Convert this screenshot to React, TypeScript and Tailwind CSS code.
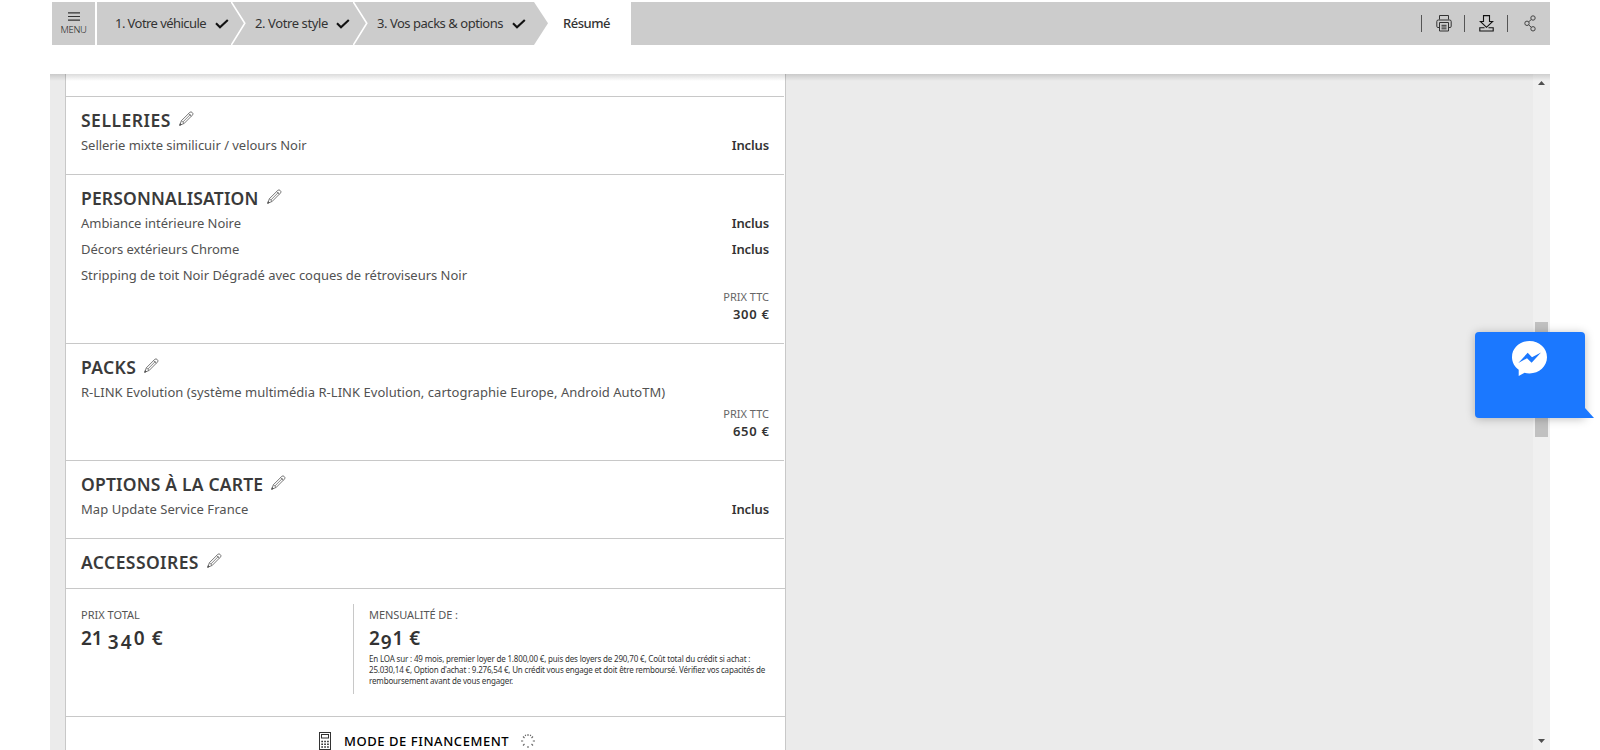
import type { ReactNode } from "react";

function Pencil() {
  return (
    <svg className="-mt-[5px] ml-2 h-[15px] w-[15px]" viewBox="0 0 15 15" fill="none" stroke="#555" strokeWidth="0.8" strokeLinejoin="round">
      <path d="M0.7 14.3 L2.4 9.7 L10.9 1.3 Q12 0.3 13.2 1.5 Q14.6 2.8 13.6 3.9 L5.2 12.4 Z" />
      <path d="M2.4 9.7 L5.2 12.4 M3.8 11.1 L11.6 3.2 M9.6 2.6 L12.3 5.3" strokeWidth="0.7" />
      <path d="M0.7 14.3 L1.3 12.6 L2.3 13.6 Z" fill="#444" />
    </svg>
  );
}

function Check() {
  return (
    <svg className="h-[10px] w-[14px]" viewBox="0 0 14 10" fill="none" stroke="#111" strokeWidth="2.1">
      <path d="M1 4.3 L5 8.2 L12.8 1" />
    </svg>
  );
}

function Chevron() {
  return (
    <svg className="h-[43px] w-4 shrink-0" viewBox="0 0 16 43" fill="none" stroke="#fff" strokeWidth="1.6">
      <path d="M0 -0.5 L13.8 21.2 L0 43.5" />
    </svg>
  );
}

function Section({ title, tracking, last, children }: { title: string; tracking: string; last?: boolean; children?: ReactNode }) {
  return (
    <section className={"mr-px border-t border-[#c8c8c8] pl-[15px] pr-[15px] pt-3 " + (last ? "pb-[14px]" : "pb-4")}>
      <div className="flex h-[23px] items-center">
        <h2 className={"text-[17.5px] font-semibold leading-[23px] text-[#3a3a3a] " + tracking}>{title}</h2>
        <Pencil />
      </div>
      {children}
    </section>
  );
}

function Row({ label, tracking = "", included }: { label: string; tracking?: string; included?: boolean }) {
  return (
    <div className="flex h-[26px] items-center justify-between whitespace-nowrap text-[13px] leading-[26px]">
      <span className={"text-[#525252] " + tracking}>{label}</span>
      {included && <span className="font-semibold tracking-[-0.12px]">Inclus</span>}
    </div>
  );
}

function Price({ value }: { value: string }) {
  return (
    <div className="h-[39px] text-right">
      <div className="text-[11px] leading-[17px] text-[#666]">PRIX TTC</div>
      <div className="-mr-[0.6px] pt-px text-[13px] font-semibold leading-[17px] tracking-[0.7px]">{value}</div>
    </div>
  );
}

function Low({ children }: { children: ReactNode }) {
  return <span className="inline-block translate-y-1">{children}</span>;
}

const tab = "flex shrink-0 items-center justify-between whitespace-nowrap";

export default function App() {
  return (
    <div className="relative h-[750px] w-[1600px] overflow-hidden bg-white font-['Noto_Sans','Open_Sans',sans-serif] text-[#333]">
      <header className="flex h-[74px] pl-[52px] pr-[50px] pt-[2px]">
        <div className="flex h-[43px] w-full bg-[#ccc] text-[13px] text-[#333]">
          <div className="flex w-[43px] flex-col items-center pt-[10px]">
            <svg className="h-[9px] w-3" viewBox="0 0 12 9" stroke="#333" strokeWidth="1.2">
              <path d="M0 0.8 H12 M0 4.5 H12 M0 8.2 H12" />
            </svg>
            <span className="mt-[2px] text-[9.5px] font-light leading-[14px] tracking-[-0.3px] text-[#222]">MENU</span>
          </div>
          <div className="w-[2px] bg-white" />
          <div className={tab + " w-[134px] pl-[18px] pr-[2px]"}>
            <span className="tracking-[-0.56px]">1. Votre véhicule</span>
            <Check />
          </div>
          <Chevron />
          <div className={tab + " w-[106px] pl-[8px] pr-[3px]"}>
            <span className="tracking-[-0.4px]">2. Votre style</span>
            <Check />
          </div>
          <Chevron />
          <div className={tab + " w-[165px] pl-[8px] pr-[8px]"}>
            <span className="tracking-[-0.47px]">3. Vos packs &amp; options</span>
            <Check />
          </div>
          <div className="flex w-[97px] items-center bg-white">
            <svg className="h-[43px] w-[14px]" viewBox="0 0 14 43" fill="#ccc">
              <path d="M0 0 L14 21.3 L0 43 Z" />
            </svg>
            <span className="pl-[15px] font-medium tracking-[-0.5px]">Résumé</span>
          </div>
          <div className="flex flex-1 items-center justify-end pr-[14px]">
            <div className="h-[17px] w-px bg-[#555]" />
            <svg className="ml-[14px] mr-[12px] h-[17px] w-4" viewBox="0 0 16 17" fill="none" stroke="#333" strokeWidth="1">
              <path d="M3.5 4.5 V0.5 H12.5 V4.5 M3.5 12.5 H2 Q0.8 12.5 0.8 11.3 V6.5 Q0.8 5 2.3 5 H13.7 Q15.2 5 15.2 6.5 V11.3 Q15.2 12.5 14 12.5 H12.5" />
              <path d="M3.5 7.5 H12.5 V16 H3.5 Z M5.5 10.3 H10.5 M5.5 12 H10.5 M5.5 13.8 H10.5" />
            </svg>
            <div className="h-[17px] w-px bg-[#555]" />
            <svg className="ml-[14px] mr-[13px] h-[17px] w-[15px]" viewBox="0 0 15 17" fill="none" stroke="#111" strokeWidth="1.1">
              <path d="M4.5 0.6 H10.5 V6.5 H13.6 L7.5 12.3 L1.4 6.5 H4.5 Z" />
              <path d="M5.5 12.7 H0.8 V16 H14.2 V12.7 H9.5" />
            </svg>
            <div className="h-[17px] w-px bg-[#555]" />
            <svg className="ml-[16px] h-[17px] w-3" viewBox="0 0 12 17" fill="none" stroke="#444" strokeWidth="1">
              <circle cx="9" cy="3" r="2.2" />
              <circle cx="3" cy="8.3" r="2.2" />
              <circle cx="9" cy="13.8" r="2.2" />
              <path d="M4.7 6.8 L7.3 4.5 M4.7 9.9 L7.3 12.3" />
            </svg>
          </div>
        </div>
      </header>

      <main className="relative mx-[50px] flex h-[676px] justify-between overflow-hidden bg-[#ebebeb] pl-[15px]">
        <div className="pointer-events-none absolute inset-x-0 top-0 h-[7px] bg-linear-to-b from-black/14 to-transparent" />
        <div className="h-full w-[721px] border-x border-[#c8c8c8] bg-white pt-[22px]">
          <Section title="SELLERIES" tracking="tracking-[0.5px]">
            <Row label="Sellerie mixte similicuir / velours Noir" tracking="tracking-[-0.03px]" included />
          </Section>
          <Section title="PERSONNALISATION" tracking="tracking-[0.16px]">
            <Row label="Ambiance intérieure Noire" tracking="tracking-[-0.04px]" included />
            <Row label="Décors extérieurs Chrome" tracking="tracking-[-0.06px]" included />
            <Row label="Stripping de toit Noir Dégradé avec coques de rétroviseurs Noir" tracking="tracking-[-0.02px]" />
            <Price value="300 €" />
          </Section>
          <Section title="PACKS" tracking="tracking-[0.35px]">
            <Row label="R-LINK Evolution (système multimédia R-LINK Evolution, cartographie Europe, Android AutoTM)" tracking="tracking-[0.035px]" />
            <Price value="650 €" />
          </Section>
          <Section title="OPTIONS À LA CARTE" tracking="tracking-[0.19px]">
            <Row label="Map Update Service France" tracking="tracking-[0.05px]" included />
          </Section>
          <Section title="ACCESSOIRES" tracking="tracking-[0.42px]" last />

          <section className="flex h-[128px] border-t border-[#c8c8c8] pl-[15px] pt-[15px]">
            <div className="h-[90px] w-[273px] border-r border-[#c8c8c8] pt-[3px]">
              <div className="text-[11px] leading-4 text-[#555]">PRIX TOTAL</div>
              <div className="mt-[4px] text-[19px] font-semibold leading-[22px]">
                21<span className="ml-[5px] tracking-[2.1px]"><Low>3</Low><Low>4</Low>0</span>
                <span className="ml-[5px]">€</span>
              </div>
            </div>
            <div className="pl-[15px] pt-[3px]">
              <div className="text-[11px] leading-4 tracking-[-0.07px] text-[#555]">MENSUALITÉ DE :</div>
              <div className="mt-[4px] text-[19px] font-semibold leading-[22px] tracking-[0.9px]">
                2<Low>9</Low>1<span className="ml-[5px]">€</span>
              </div>
              <div className="mt-[4px] whitespace-nowrap text-[8px] leading-[11px] tracking-[-0.17px]">
                En LOA sur : 49 mois, premier loyer de 1.800,00 €, puis des loyers de 290,70 €, Coût total du crédit si achat :
                <br />
                <span className="tracking-[-0.19px]">25.030,14 €, Option d'achat : 9.276,54 €, Un crédit vous engage et doit être remboursé. Vérifiez vos capacités de</span>
                <br />
                remboursement avant de vous engager.
              </div>
            </div>
          </section>

          <section className="flex border-t border-[#c8c8c8] pl-[253px] pt-[15px] text-black">
            <svg className="h-[19px] w-[12px]" viewBox="0 0 12 19" fill="none" stroke="#333" strokeWidth="1">
              <rect x="0.5" y="0.5" width="11" height="17" />
              <rect x="2.5" y="2.5" width="7" height="3.5" />
              <path d="M2.3 9.5 H10 M2.3 12.3 H10 M2.3 15 H10" strokeWidth="1.6" strokeDasharray="1.7 1.2" />
            </svg>
            <span className="ml-[13px] h-[19px] whitespace-nowrap text-[13px] font-medium leading-[19px] tracking-[0.56px]">MODE DE FINANCEMENT</span>
            <svg className="ml-[12px] mt-[2px] h-[14px] w-[14px]" viewBox="0 0 14 14" stroke="#666" strokeWidth="1.1">
              <path d="M7 0 V2 M7 12 V14 M0 7 H2.2 M11.8 7 H14 M2 2.5 L3.5 4 M10.5 10 L12 11.500 M2 11.500 L3.5 10 M10.5 4 L12 2.500 M4.200 0.800 L4.700 2 M9.800 0.800 L9.300 2" />
            </svg>
          </section>
        </div>

        <div className="flex h-full w-[17px] flex-col items-center bg-[#f0f0f0]">
          <svg className="mt-[7px] h-1 w-[7px]" viewBox="0 0 7 4" fill="#505050"><path d="M0 4 L3.5 0 L7 4 Z" /></svg>
          <div className="mt-[237px] h-[115px] w-[13px] bg-[#c1c1c1]" />
          <svg className="mt-[302px] h-1 w-[7px]" viewBox="0 0 7 4" fill="#505050"><path d="M0 0 L3.5 4 L7 0 Z" /></svg>
        </div>
      </main>

      <div className="absolute left-[1475px] top-[332px] flex h-[86px] w-[110px] justify-center rounded-[4px] rounded-br-none bg-[#1b78ff] pr-[2px] pt-[9px] shadow-[0_1px_10px_rgba(0,0,0,0.25)]">
        <svg className="h-[35px] w-[35px]" viewBox="0 0 35 35">
          <path d="M17.5 0 C7.8 0 0 7 0 16 C0 21.3 2.5 25.8 6.7 28.8 V35 L12.5 31.8 C14.1 32.2 15.7 32.4 17.5 32.4 C27.2 32.4 35 25.2 35 16.2 C35 7 27.2 0 17.5 0 Z" fill="#fff" />
          <path d="M6.3 22 L15.7 11.8 L20 16.2 L29 11.6 L19.6 21.8 L15 17.3 Z" fill="#1b78ff" />
        </svg>
        <svg className="absolute left-[110px] top-[76px] h-[10px] w-[9px]" viewBox="0 0 9 10" fill="#1b78ff"><path d="M0 0 L9 10 H0 Z" /></svg>
      </div>
    </div>
  );
}
